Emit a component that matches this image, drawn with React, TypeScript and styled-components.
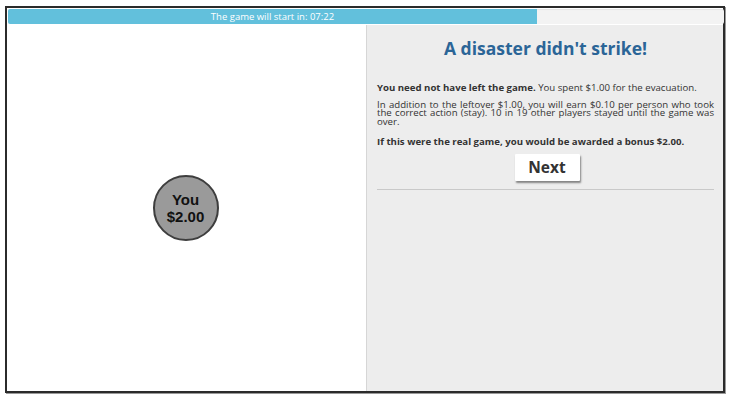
import React from "react";
import styled, { createGlobalStyle } from "styled-components";

const Global = createGlobalStyle`
  html, body { margin: 0; padding: 0; background: #ffffff; }
  body { font-family: "Open Sans", "Liberation Sans", sans-serif; }
`;

const Page = styled.div`
  width: 738px;
  height: 413px;
  padding: 6px 0 0 5px;
  box-sizing: border-box;
`;

const Frame = styled.div`
  width: 720px;
  height: 387px;
  box-sizing: border-box;
  border: 2px solid #2b2b2b;
  box-shadow: 1px 1px 0 #999;
  display: flex;
  flex-direction: column;
  background: #fff;
`;

const Track = styled.div`
  margin: 1px 0 0 1px;
  width: 716px;
  height: 15px;
  background: #f3f3f3;
  border-radius: 2px;
  box-shadow: inset 0 1px 1px rgba(0,0,0,0.06);
  display: flex;
  flex: none;
`;

const Fill = styled.div`
  height: 100%;
  background: #62c0dc;
  border-radius: 2px 0 0 2px;
  color: #fff;
  font-size: 9.5px;
  line-height: 15px;
  text-align: center;
  white-space: nowrap;
`;

const Panels = styled.div`
  flex: 1;
  display: flex;
  margin-top: 1px;
`;

const Board = styled.div`
  width: 359px;
  display: flex;
  align-items: center;
  justify-content: center;
  padding-bottom: 1px;
  box-sizing: border-box;
`;

const Token = styled.div`
  width: 66px;
  height: 66px;
  border-radius: 50%;
  background: #9a9a9a;
  border: 2px solid #3e3e3e;
  box-sizing: border-box;
  display: flex;
  flex-direction: column;
  align-items: center;
  justify-content: center;
  font-family: "Liberation Sans", Arial, sans-serif;
  font-weight: bold;
  font-size: 15px;
  line-height: 17px;
  color: #111;
  margin-left: -2px;
`;

const Side = styled.div`
  flex: 1;
  background: #ededed;
  border-left: 1px solid #d6d6d6;
  padding: 11px 9px 0 10px;
  box-sizing: border-box;
  color: #333;
`;

const Title = styled.h1`
  margin: 0 0 24px;
  text-align: center;
  color: #2b6597;
  font-size: 17.5px;
  font-weight: 700;
  line-height: 24px;
`;

const Para = styled.p<{ $after: number }>`
  margin: 0 0 ${(p) => p.$after}px;
  font-size: 9.65px;
  line-height: 8.7px;
  text-align: justify;
  color: #333;
`;

const Strong = styled.b`
  font-weight: 700;
`;

const ButtonRow = styled.div`
  display: flex;
  justify-content: center;
  padding: 0 0 8px;
  border-bottom: 1px solid #c9c9c9;
`;

const NextButton = styled.button`
  width: 65px;
  height: 27px;
  background: #fff;
  border: none;
  border-radius: 1px;
  box-shadow: 1px 2px 2px rgba(0,0,0,0.45);
  font-family: "Open Sans", "Liberation Sans", sans-serif;
  font-weight: 700;
  font-size: 15.5px;
  color: #333;
  padding: 0;
  margin-left: 3px;
`;

export default function App() {
  return (
    <Page>
      <Global />
      <Frame>
        <Track>
          <Fill style={{ width: `${(529 / 716) * 100}%` }}>
            The game will start in: 07:22
          </Fill>
        </Track>
        <Panels>
          <Board>
            <Token>
              <span>You</span>
              <span>$2.00</span>
            </Token>
          </Board>
          <Side>
            <Title>A disaster didn't strike!</Title>
            <Para $after={8}>
              <Strong>You need not have left the game.</Strong> You spent $1.00 for the evacuation.
            </Para>
            <Para $after={11}>
              In addition to the leftover $1.00, you will earn $0.10 per person who took the correct action (stay). 10 in 19 other players stayed until the game was over.
            </Para>
            <Para $after={7}>
              <Strong>If this were the real game, you would be awarded a bonus $2.00.</Strong>
            </Para>
            <ButtonRow>
              <NextButton>Next</NextButton>
            </ButtonRow>
          </Side>
        </Panels>
      </Frame>
    </Page>
  );
}
